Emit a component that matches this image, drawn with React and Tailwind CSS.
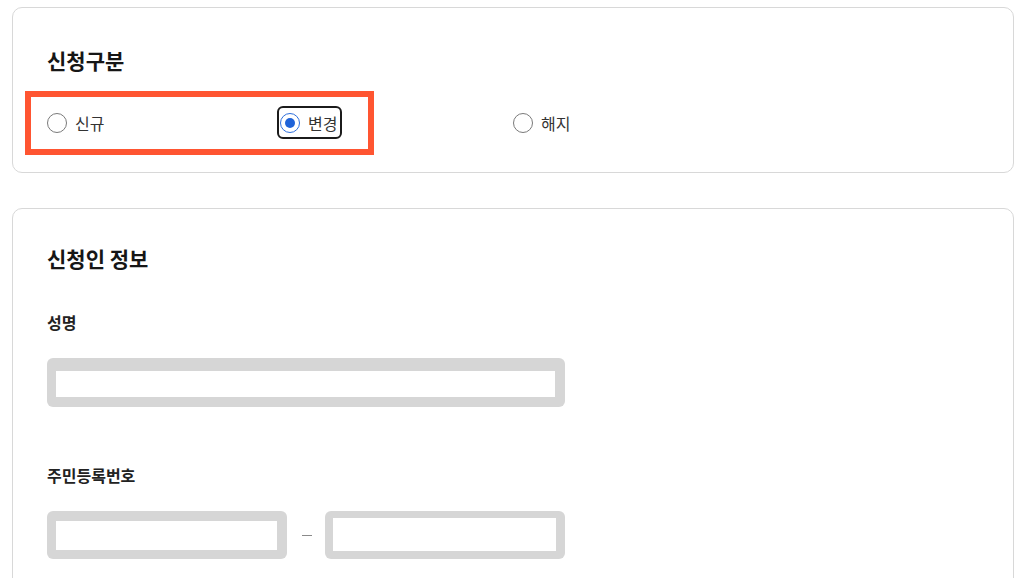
import { useState } from 'react';

const FONT = { fontFamily: '"Noto Sans CJK KR", "Noto Sans", sans-serif' };

const OPTIONS = [
  { id: 'new', label: '신규' },
  { id: 'change', label: '변경' },
  { id: 'cancel', label: '해지' },
];

function Radio({ checked }) {
  return checked ? (
    <span className="flex items-center justify-center w-[20px] h-[20px] rounded-full border border-[#2f6fdc] bg-white shrink-0">
      <span className="w-[10px] h-[10px] rounded-full bg-[#1f63d8]" />
    </span>
  ) : (
    <span className="w-[20px] h-[20px] rounded-full border border-[#7a7a7a] bg-white shrink-0" />
  );
}

export default function App() {
  const [type, setType] = useState('change');

  return (
    <div className="min-h-[578px] bg-white pt-[7px] text-[#222]" style={FONT}>
      {/* 신청구분 */}
      <section className="relative ml-[12px] w-[1002px] border border-[#d8d8d8] rounded-[10px] px-[34px] pt-[38px] pb-[36px]">
        <h2 className="text-[21px] leading-[28px] font-bold text-[#161616]">신청구분</h2>
        <div className="grid grid-cols-4 mt-[35px]">
          {OPTIONS.map((o) => (
            <div key={o.id} className="flex">
              <button
                onClick={() => setType(o.id)}
                className={`flex items-center gap-[8px] h-[27px] rounded-[3px] ${
                  type === o.id ? 'outline-2 outline-offset-[1px] outline-[#1b1b1b] pr-[2px]' : ''
                }`}
              >
                <Radio checked={type === o.id} />
                <span className="text-[16px] leading-[22px] text-[#333]">{o.label}</span>
              </button>
            </div>
          ))}
        </div>

        {/* highlight box */}
        <div className="absolute left-[12px] top-[83px] w-[349px] h-[64px] border-[6px] border-[#ff5531] pointer-events-none" />
      </section>

      {/* 신청인 정보 */}
      <section className="ml-[12px] mt-[35px] w-[1002px] border border-[#d8d8d8] rounded-[10px] px-[34px] pt-[35px] pb-[40px]">
        <h2 className="text-[21px] leading-[28px] font-bold text-[#161616]">신청인 정보</h2>

        <div className="mt-[39px]">
          <div className="text-[16px] leading-[22px] font-bold text-[#222]">성명</div>
          <div className="mt-[25px] w-[518px] bg-[#d6d6d6] rounded-[6px] pt-[13px] pb-[10px] pl-[9px] pr-[10px]">
            <div className="h-[26px] bg-white" />
          </div>
        </div>

        <div className="mt-[57px]">
          <div className="text-[16px] leading-[22px] font-bold text-[#222]">주민등록번호</div>
          <div className="mt-[25px] flex items-center">
            <div className="w-[240px] bg-[#d6d6d6] rounded-[6px] pt-[10px] pb-[9px] pl-[9px] pr-[10px]">
              <div className="h-[29px] bg-white" />
            </div>
            <span className="mx-[15px] w-[10px] h-px bg-[#8a8a8a]" />
            <div className="-ml-[2px] w-[240px] bg-[#d6d6d6] rounded-[6px] pt-[7px] pb-[8px] pl-[8px] pr-[9px]">
              <div className="h-[33px] bg-white" />
            </div>
          </div>
        </div>
      </section>
    </div>
  );
}
